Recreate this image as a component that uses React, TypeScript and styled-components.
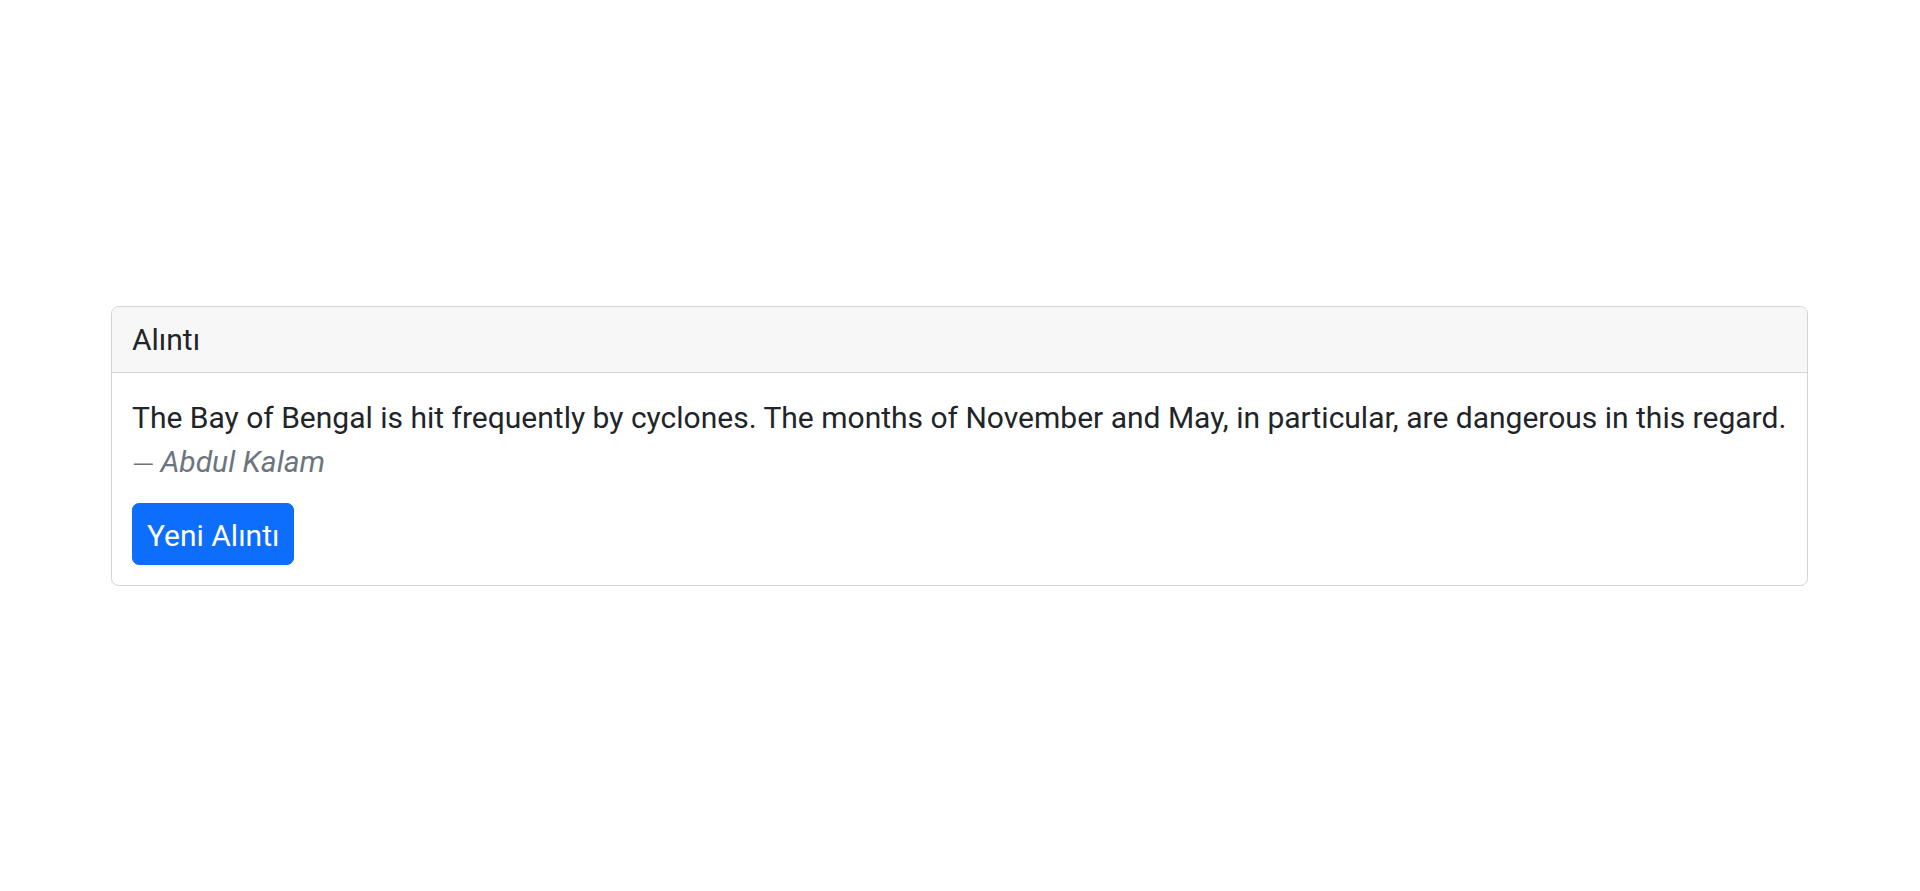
import React, { useState } from "react";
import styled, { createGlobalStyle } from "styled-components";

const GlobalStyle = createGlobalStyle`
  * { box-sizing: border-box; }
  html, body { margin: 0; padding: 0; background: #ffffff; }
  body {
    font-family: Roboto, "Liberation Sans", Arial, sans-serif;
    color: #212529;
    -webkit-font-smoothing: antialiased;
  }
`;

const Page = styled.main`
  min-height: 100vh;
  display: flex;
  flex-direction: column;
  justify-content: center;
  padding: 0 112px 0 111px;
`;

const Card = styled.section`
  display: flex;
  flex-direction: column;
  border: 1px solid #d3d3d4;
  border-radius: 7.5px;
  background: #ffffff;
  overflow: hidden;
`;

const CardHeader = styled.header`
  padding: 11px 20px 10px;
  font-size: 30px;
  line-height: 44px;
  background: #f7f7f7;
  border-bottom: 1px solid #d3d3d4;
  color: #212529;
`;

const CardBody = styled.div`
  display: flex;
  flex-direction: column;
  align-items: flex-start;
  gap: 19px;
  padding: 22px 20px 20px;
`;

const Figure = styled.figure`
  margin: 0;
  display: flex;
  flex-direction: column;
`;

const Quote = styled.blockquote`
  margin: 0;
  font-size: 30px;
  line-height: 45px;
  color: #212529;
`;

const Caption = styled.figcaption`
  font-size: 30px;
  line-height: 44px;
  color: #6c757d;
  display: flex;
  align-items: baseline;
`;

const Dash = styled.span`
  font-size: 29px;
  font-weight: 300;
  font-style: normal;
  margin-right: 6px;
  position: relative;
  top: 3px;
`;

const Author = styled.cite`
  font-style: italic;
`;

const Button = styled.button`
  font-family: inherit;
  font-size: 30px;
  line-height: 45px;
  color: #ffffff;
  background: #0d6efd;
  border: 1px solid #0d6efd;
  border-radius: 7px;
  padding: 9px 14px 6px;
  cursor: pointer;
  &:hover { background: #0b5ed7; border-color: #0a58ca; }
`;

const quotes = [
  {
    text: "The Bay of Bengal is hit frequently by cyclones. The months of November and May, in particular, are dangerous in this regard.",
    author: "Abdul Kalam",
  },
  {
    text: "Dream, dream, dream. Dreams transform into thoughts and thoughts result in action.",
    author: "Abdul Kalam",
  },
];

export default function App() {
  const [index, setIndex] = useState(0);
  const q = quotes[index];
  return (
    <>
      <GlobalStyle />
      <Page>
        <Card>
          <CardHeader>Alıntı</CardHeader>
          <CardBody>
            <Figure>
              <Quote>{q.text}</Quote>
              <Caption>
                <Dash>—</Dash>
                <Author>{q.author}</Author>
              </Caption>
            </Figure>
            <Button onClick={() => setIndex((index + 1) % quotes.length)}>Yeni Alıntı</Button>
          </CardBody>
        </Card>
      </Page>
    </>
  );
}
